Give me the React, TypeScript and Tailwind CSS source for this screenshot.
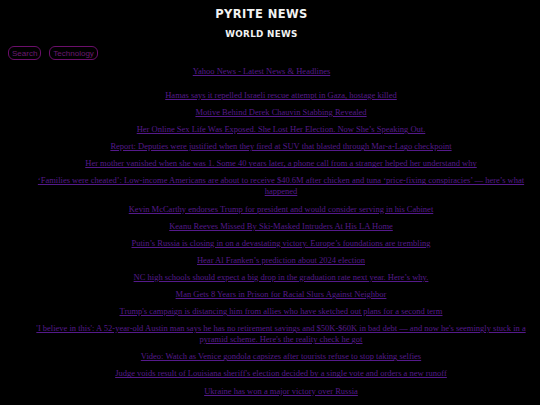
import React from "react";

const items: string[] = [
  "Hamas says it repelled Israeli rescue attempt in Gaza, hostage killed",
  "Motive Behind Derek Chauvin Stabbing Revealed",
  "Her Online Sex Life Was Exposed. She Lost Her Election. Now She’s Speaking Out.",
  "Report: Deputies were justified when they fired at SUV that blasted through Mar-a-Lago checkpoint",
  "Her mother vanished when she was 1. Some 40 years later, a phone call from a stranger helped her understand why",
  "‘Families were cheated’: Low-income Americans are about to receive $40.6M after chicken and tuna ‘price-fixing conspiracies’ — here’s what happened",
  "Kevin McCarthy endorses Trump for president and would consider serving in his Cabinet",
  "Keanu Reeves Missed By Ski-Masked Intruders At His LA Home",
  "Putin’s Russia is closing in on a devastating victory. Europe’s foundations are trembling",
  "Hear Al Franken’s prediction about 2024 election",
  "NC high schools should expect a big drop in the graduation rate next year. Here’s why.",
  "Man Gets 8 Years in Prison for Racial Slurs Against Neighbor",
  "Trump's campaign is distancing him from allies who have sketched out plans for a second term",
  "'I believe in this': A 52-year-old Austin man says he has no retirement savings and $50K-$60K in bad debt — and now he's seemingly stuck in a pyramid scheme. Here's the reality check he got",
  "Video: Watch as Venice gondola capsizes after tourists refuse to stop taking selfies",
  "Judge voids result of Louisiana sheriff's election decided by a single vote and orders a new runoff",
  "Ukraine has won a major victory over Russia",
];

export default function App() {
  return (
    <div className="min-h-[405px] w-[540px] bg-black overflow-hidden">
      <div className="pr-[17px] pt-[7px] flex flex-col items-center">
        <h1 className="text-[#f2f2f2] font-bold text-[11.5px] leading-[15px] tracking-[0.4px]" style={{ fontFamily: '"DejaVu Sans", sans-serif' }}>
          PYRITE NEWS
        </h1>
        <h2 className="text-[#f2f2f2] font-bold text-[8.8px] leading-[11px] mt-[7px] tracking-[0.3px]" style={{ fontFamily: '"DejaVu Sans", sans-serif' }}>
          WORLD NEWS
        </h2>
      </div>
      <div className="flex gap-[8px] pl-[8px] mt-[6px]" style={{ fontFamily: '"Liberation Sans", Arial, sans-serif' }}>
        <span className="border border-[#6b0f6b] text-[#6b1a70] rounded-[6px] text-[8px] leading-[11px] px-[3px] py-[0.5px]">Search</span>
        <span className="border border-[#6b0f6b] text-[#6b1a70] rounded-[6px] text-[8px] leading-[11px] px-[3px] py-[0.5px]">Technology</span>
      </div>
      <div className="pr-[17px] mt-[6px] flex justify-center" style={{ fontFamily: '"Liberation Serif", "Times New Roman", serif' }}>
        <a className="text-[#551a8b] underline text-[8.5px] leading-[11px]">Yahoo News - Latest News &amp; Headlines</a>
      </div>
      <div className="ml-[31px] mr-[9px] mt-[13px] flex flex-col gap-[6.1px] text-center" style={{ fontFamily: '"Liberation Serif", "Times New Roman", serif' }}>
        {items.map((t, i) => (
          <div key={i} className="text-[8.5px] leading-[11px]">
            <a className="text-[#551a8b] underline">{t}</a>
          </div>
        ))}
      </div>
    </div>
  );
}
